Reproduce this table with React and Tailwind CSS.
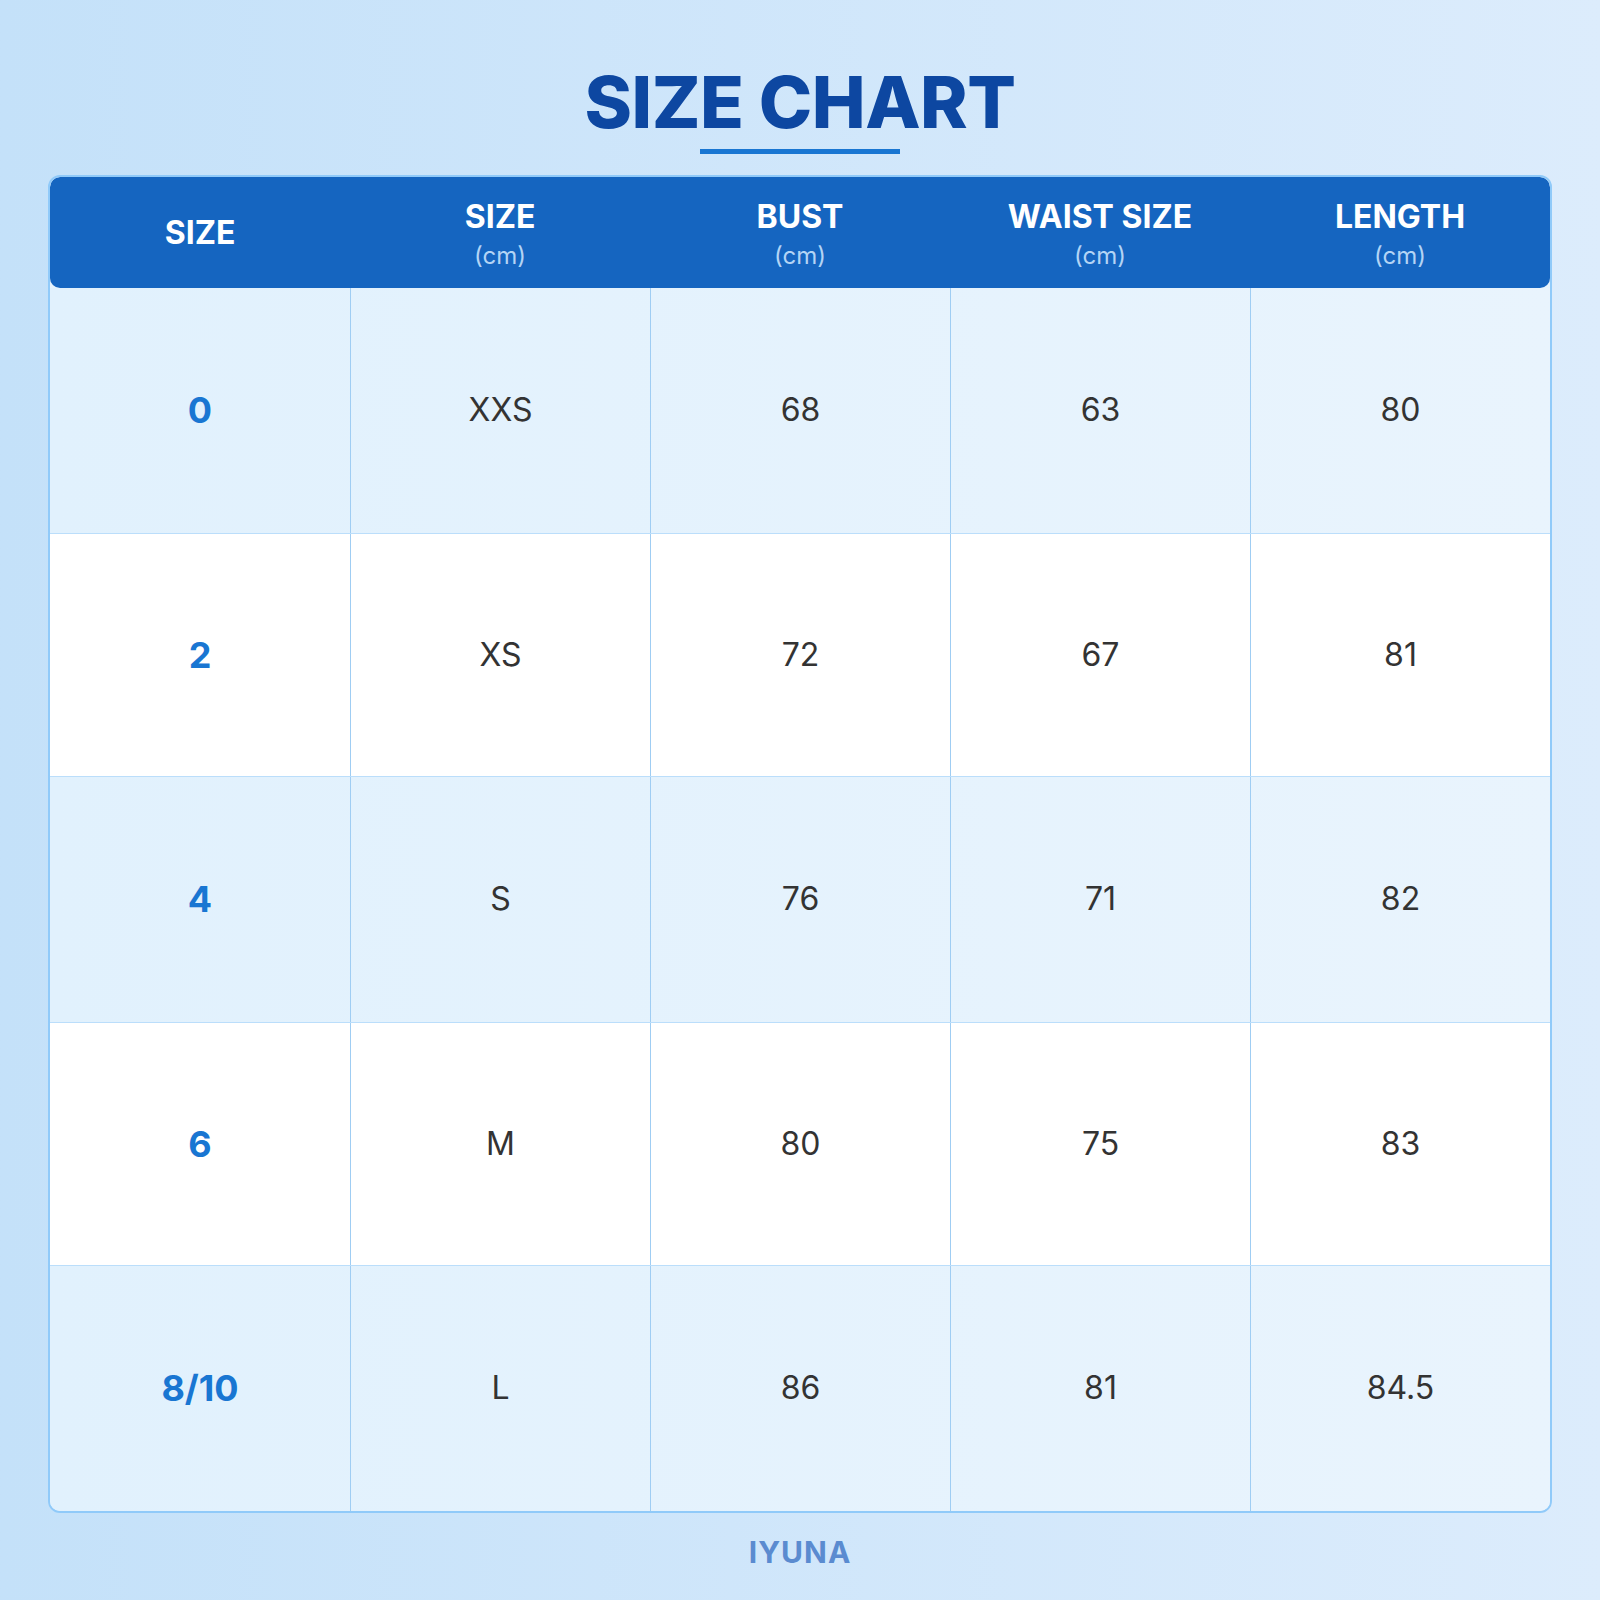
import React from "react";

const columns = [
  { label: "SIZE", unit: null },
  { label: "SIZE", unit: "(cm)" },
  { label: "BUST", unit: "(cm)" },
  { label: "WAIST SIZE", unit: "(cm)" },
  { label: "LENGTH", unit: "(cm)" },
];

const rows = [
  ["0", "XXS", "68", "63", "80"],
  ["2", "XS", "72", "67", "81"],
  ["4", "S", "76", "71", "82"],
  ["6", "M", "80", "75", "83"],
  ["8/10", "L", "86", "81", "84.5"],
];

function App() {
  return (
    <div
      className="w-[1600px] h-[1600px] bg-gradient-to-r from-[#c4e1f9] to-[#dcecfc] flex flex-col items-center px-12 pt-[66px]"
      style={{ fontFamily: "Inter, 'Noto Sans', sans-serif" }}
    >
      <h1 className="text-[72px] leading-none font-extrabold text-[#0d47a1] tracking-[-0.5px]">
        SIZE CHART
      </h1>
      <div className="w-[200px] h-[5px] bg-[#1976d2] mt-[11px]" />

      <div className="w-full mt-[21px] border-2 border-[#90caf9] rounded-xl overflow-hidden bg-[#e6f3fd]">
        <div className="grid grid-cols-5 h-[111px] bg-[#1565c0] rounded-[10px]">
          {columns.map((col, i) => (
            <div
              key={i}
              className={
                col.unit
                  ? "flex flex-col items-center justify-center pt-[5px]"
                  : "flex flex-col items-center justify-center"
              }
            >
              <span className="text-[32px] leading-[36px] font-bold text-white">
                {col.label}
              </span>
              {col.unit && (
                <span className="text-[24px] leading-[30px] text-[#b3d4f5] mt-[6px]">
                  {col.unit}
                </span>
              )}
            </div>
          ))}
        </div>

        {rows.map((row, r) => (
          <div
            key={r}
            className={
              r % 2 === 0
                ? "grid grid-cols-5 h-[244.5px] bg-gradient-to-r from-[#e1f1fd] to-[#e9f4fd]"
                : "grid grid-cols-5 h-[244.5px] bg-white border-t border-b border-[#bbdefb]"
            }
          >
            {row.map((val, c) => (
              <div
                key={c}
                className={
                  c === 0
                    ? "flex items-center justify-center text-[36px] font-bold text-[#1976d2]"
                    : "flex items-center justify-center text-[32px] text-[#333333] border-l border-[#9fcdf3]"
                }
              >
                {val}
              </div>
            ))}
          </div>
        ))}
      </div>

      <div className="mt-[24px] text-[30px] leading-none font-bold text-[#5a8bd0] tracking-[1px]">
        IYUNA
      </div>
    </div>
  );
}

export default App;
